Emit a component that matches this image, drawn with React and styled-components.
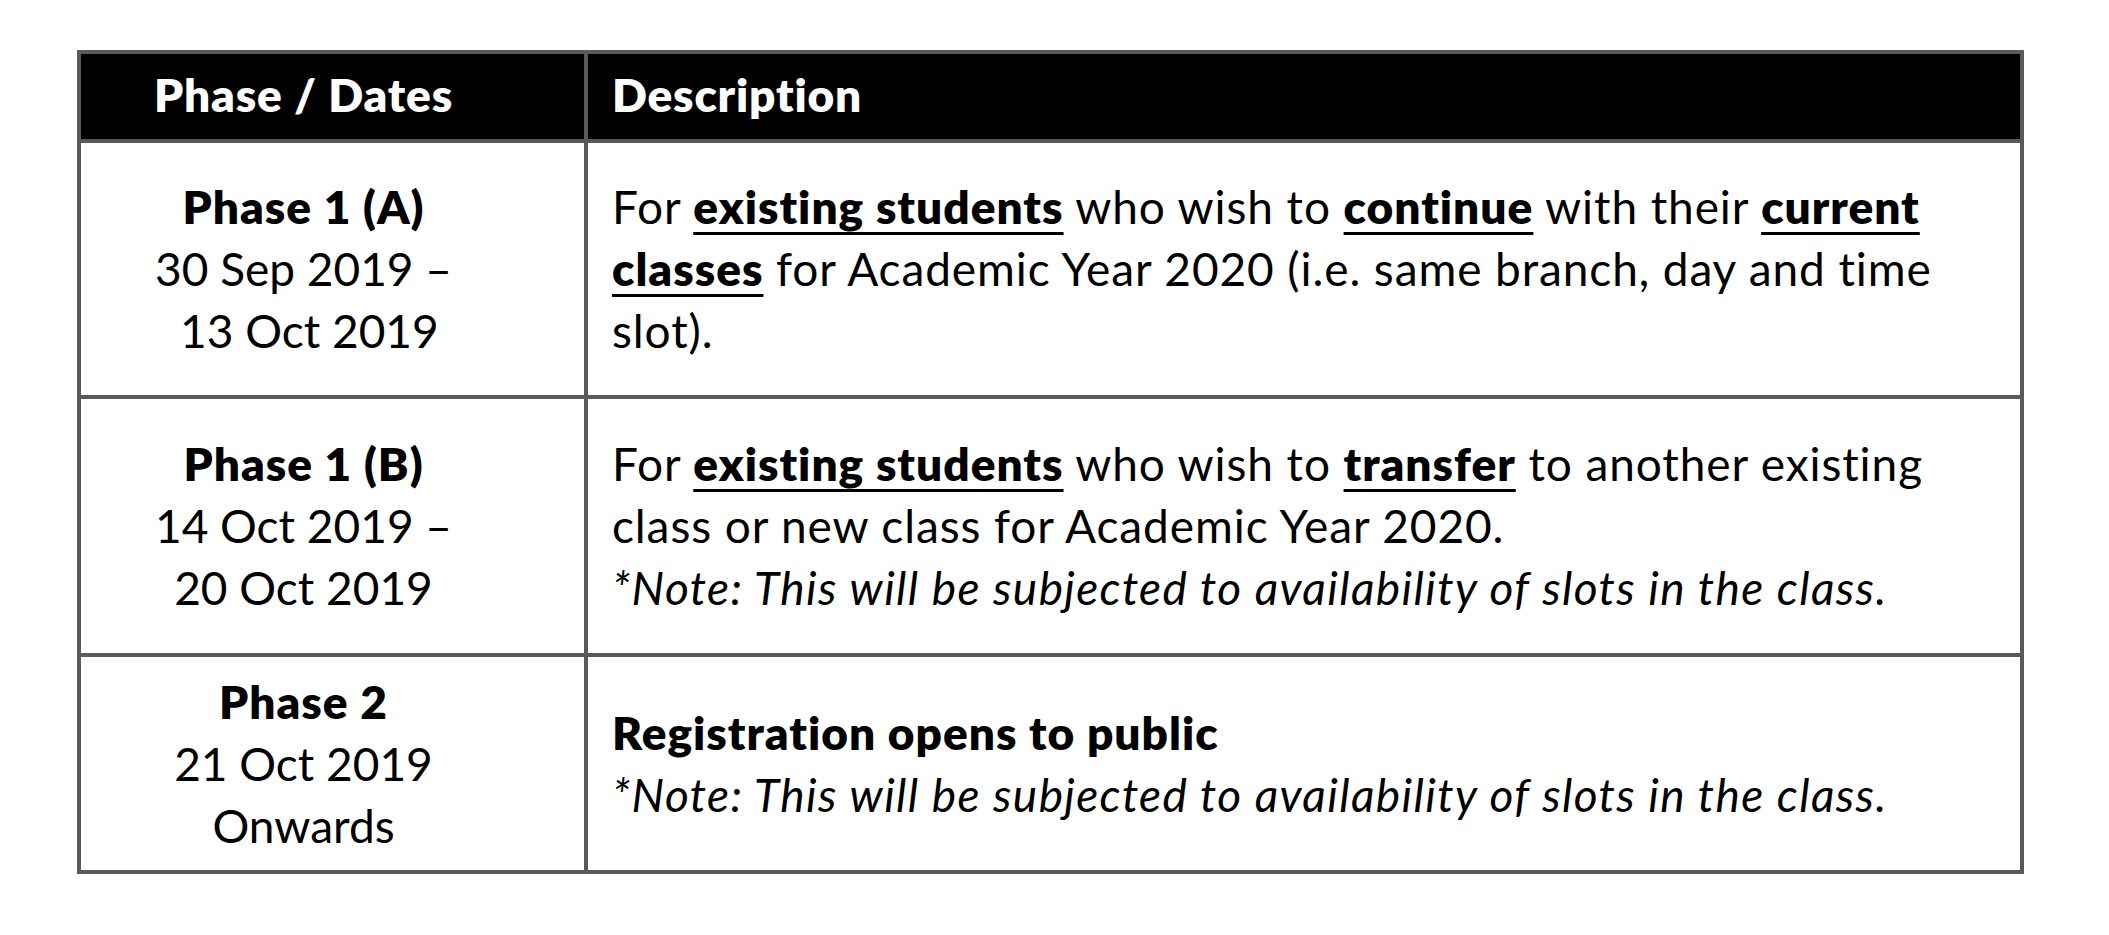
import React from 'react';
import styled, { createGlobalStyle } from 'styled-components';

const GlobalStyle = createGlobalStyle`
  html, body {
    margin: 0;
    padding: 0;
    background: #fff;
  }
  body {
    font-family: Lato, "Noto Sans", sans-serif;
    color: #000;
  }
`;

const Page = styled.div`
  width: 2109px;
  height: 935px;
  padding: 50px 0 0 77px;
  box-sizing: border-box;
`;

const Table = styled.div`
  display: grid;
  grid-template-columns: 503px 1432px;
  grid-template-rows: 85px 252px 254px 213px;
  gap: 4px;
  padding: 4px;
  width: 1947px;
  box-sizing: border-box;
  background: #5a5a5a;
`;

const HeadCell = styled.div`
  background: #000;
  color: #fff;
  font-weight: 800;
  font-size: 46px;
  letter-spacing: 0.8px;
  display: flex;
  align-items: center;
  justify-content: ${(p) => (p.$center ? 'center' : 'flex-start')};
  padding: ${(p) => (p.$center ? '0 58px 5px 0' : '0 0 5px 24px')};
`;

const PhaseCell = styled.div`
  background: #fff;
  display: flex;
  flex-direction: column;
  justify-content: center;
  align-items: center;
  padding-right: 58px;
  font-size: 46px;
  line-height: 62px;
  text-align: center;
`;

const PhaseName = styled.div`
  font-weight: 800;
  letter-spacing: 1px;
`;

const DescCell = styled.div`
  background: #fff;
  display: flex;
  flex-direction: column;
  justify-content: center;
  padding: 0 30px 0 24px;
  font-size: 46px;
  line-height: 62px;
  letter-spacing: 0.9px;
`;

const Strong = styled.strong`
  font-weight: 800;
  letter-spacing: 1px;
  text-decoration: ${(p) => (p.$plain ? 'none' : 'underline')};
  text-decoration-thickness: 3px;
  text-underline-offset: 8px;
  text-decoration-skip-ink: none;
`;

const Note = styled.div`
  font-style: italic;
  letter-spacing: 1.4px;
`;

const rows = [
  {
    name: 'Phase 1 (A)',
    dates: ['30 Sep 2019 –', '\u00a013 Oct 2019'],
    desc: (
      <div>
        For <Strong>existing students</Strong> who wish to <Strong>continue</Strong> with their{' '}
        <Strong>current classes</Strong> for Academic Year 2020 (i.e. same branch, day and time slot).
      </div>
    ),
  },
  {
    name: 'Phase 1 (B)',
    dates: ['14 Oct 2019 –', '20 Oct 2019'],
    desc: (
      <>
        <div>
          For <Strong>existing students</Strong> who wish to <Strong>transfer</Strong> to another existing class
          or new class for Academic Year 2020.
        </div>
        <Note>*Note: This will be subjected to availability of slots in the class.</Note>
      </>
    ),
  },
  {
    name: 'Phase 2',
    dates: ['21 Oct 2019', 'Onwards'],
    desc: (
      <>
        <div>
          <Strong $plain>Registration opens to public</Strong>
        </div>
        <Note>*Note: This will be subjected to availability of slots in the class.</Note>
      </>
    ),
  },
];

const App = () => (
  <Page>
    <GlobalStyle />
    <Table>
      <HeadCell $center>Phase / Dates</HeadCell>
      <HeadCell>Description</HeadCell>
      {rows.map((r) => (
        <React.Fragment key={r.name}>
          <PhaseCell>
            <PhaseName>{r.name}</PhaseName>
            {r.dates.map((d) => (
              <div key={d}>{d}</div>
            ))}
          </PhaseCell>
          <DescCell>{r.desc}</DescCell>
        </React.Fragment>
      ))}
    </Table>
  </Page>
);

export default App;
